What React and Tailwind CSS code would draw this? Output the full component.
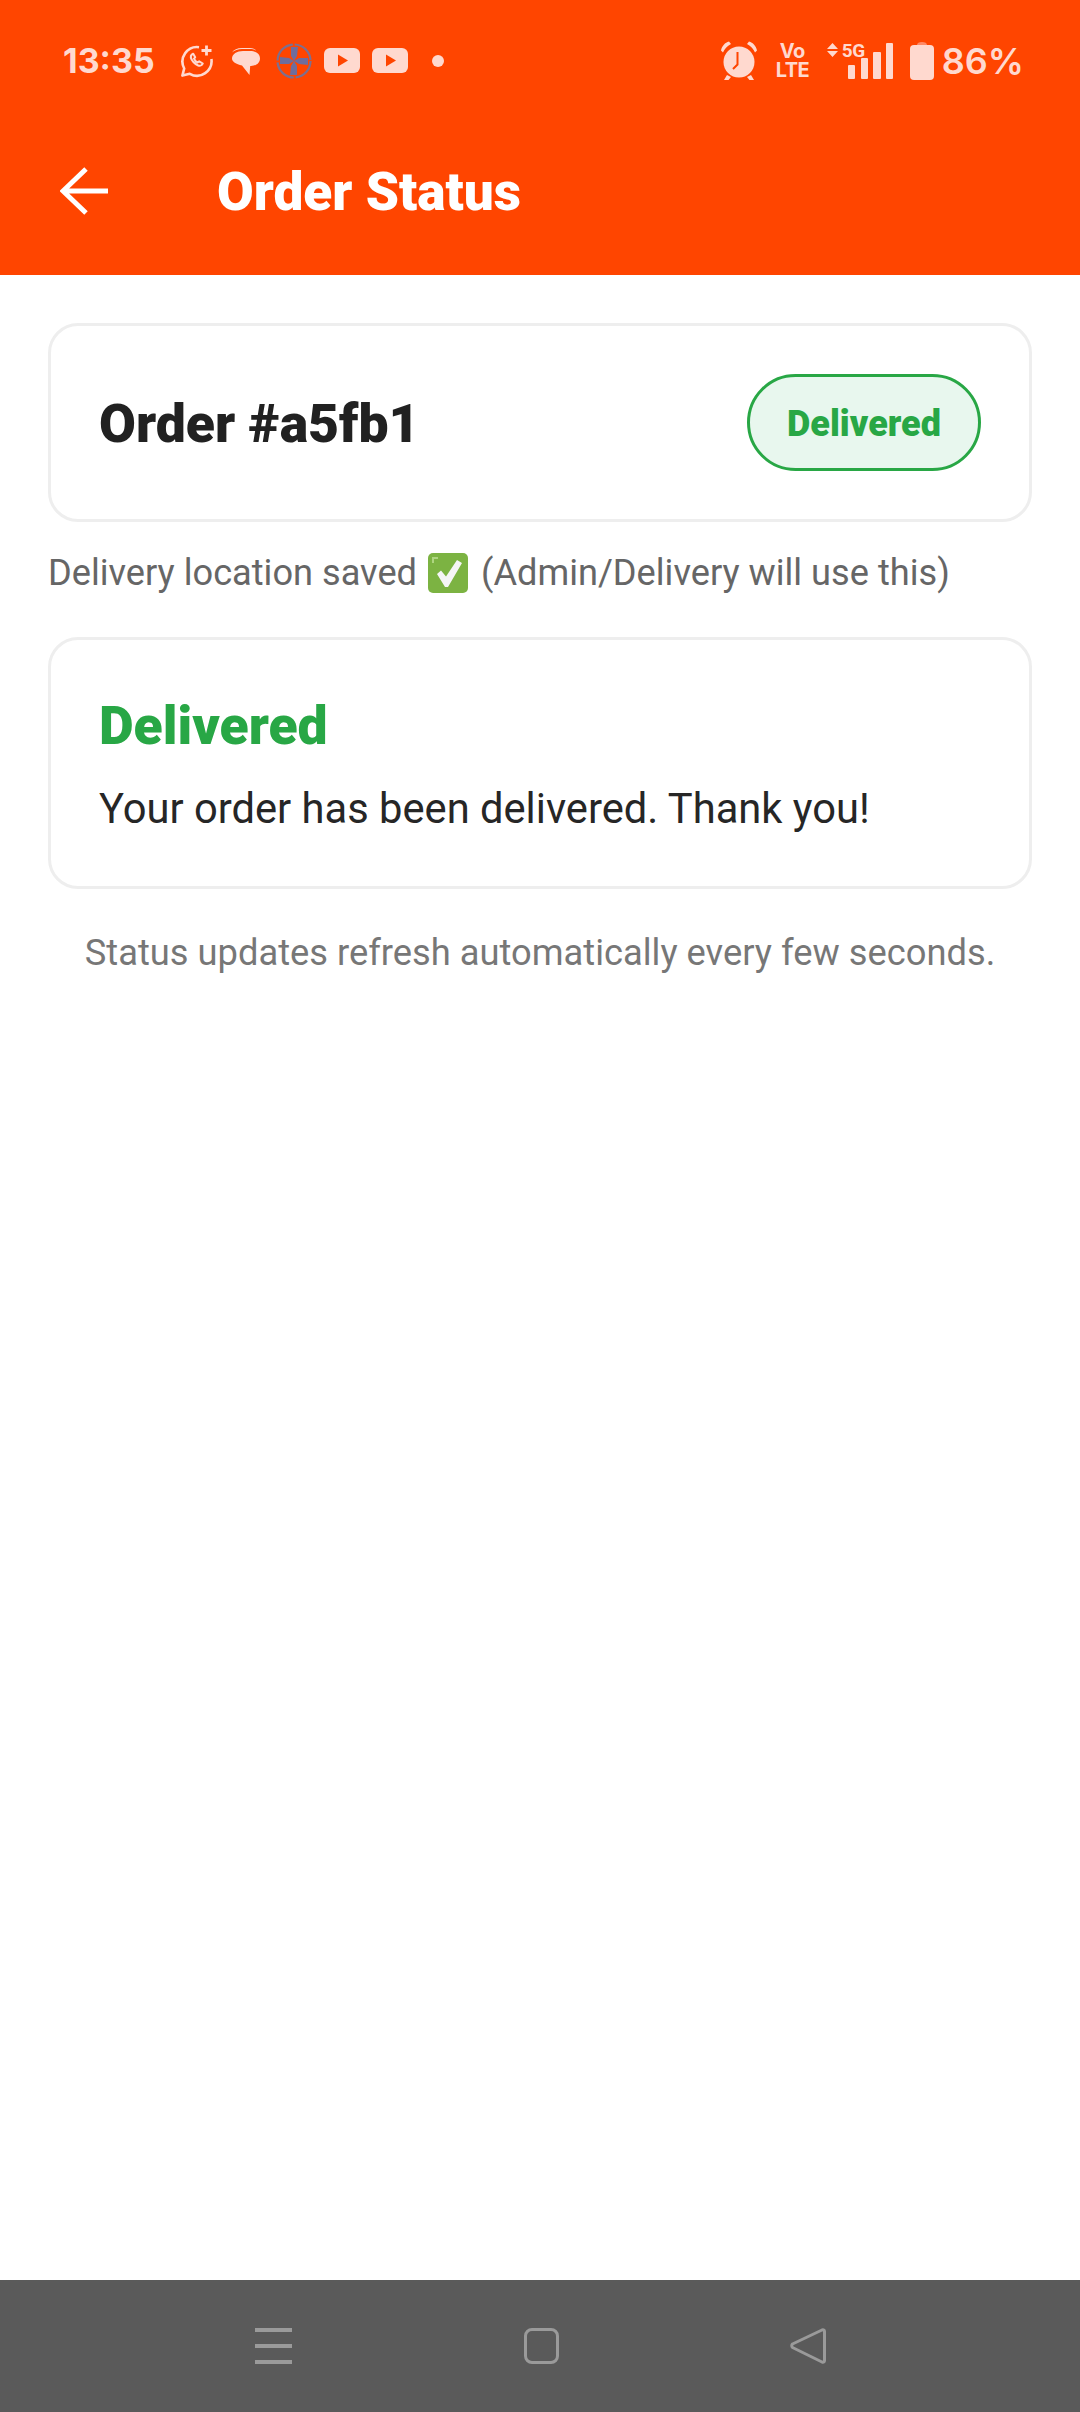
// Order status screen on a phone: status bar, header, two cards, nav bar

const tint = "#ffd9cf"

function WhatsAppPlus() {
  return (
    <svg width="34" height="34" viewBox="0 0 34 34" fill="none" stroke={tint} strokeWidth="2.6">
      <path d="M19 3.2A14.6 14.6 0 0 0 4.2 24.5L2.4 31.6l7.4-1.8A14.6 14.6 0 0 0 31.4 15" strokeLinejoin="round" />
      <path d="M11.8 10.5c-1.6 1.6-1 4.6 1.8 7.8 3 3.2 6.4 4.4 8.2 2.6l1-1.4-3.6-2.2-1.6 1.2c-1.4-.6-3-2.2-3.6-3.8l1.2-1.4-2-3.6z" strokeWidth="2" strokeLinejoin="round" />
      <path d="M26.5 1.5v10M21.5 6.5h10" strokeWidth="2.8" />
    </svg>
  )
}

function ChatBubble() {
  return (
    <svg width="30" height="29" viewBox="0 0 30 29">
      <path d="M1 5.500C3 2.500 6 1 11 1h8c3 0 5 1 6 2.500-2-1-4-1.400-6-1.400h-8C7 2.100 3.500 3.500 1 5.500z" fill={tint} />
      <path d="M12 4h7c6 0 10 3 10 7.500S25 19 20 19l-.8 0-.7 9-7.500-9.500C5 17 1 15 1 11.500 1 7 6 4 12 4z" fill={tint} />
    </svg>
  )
}

function Pinwheel() {
  return (
    <svg width="36" height="36" viewBox="0 0 36 36">
      <circle cx="18" cy="18" r="16.500" fill="none" stroke="#7d6f8e" strokeWidth="2.200" strokeDasharray="24 2" />
      <path d="M15 4h7l-1 9-3 5-3-5zM32 15v7l-9-1-5-3 5-3zM21 32h-7l1-9 3-5 3 5zM4 21v-7l9 1 5 3-5 3z" fill="#6f6d9c" />
    </svg>
  )
}

function YouTube() {
  return (
    <svg width="36" height="26" viewBox="0 0 36 26">
      <rect x="0" y="0" width="36" height="25" rx="6" fill={tint} />
      <path d="M14 6.500l10 6-10 6z" fill="#ff4500" />
    </svg>
  )
}

function Alarm() {
  return (
    <svg width="38" height="40" viewBox="0 0 38 40">
      <path d="M1 9.500C2 5 5 1.500 9 .500l2 2.500C7 5 4.500 8 3 11.500zM37 9.500C36 5 33 1.500 29 .500l-2 2.500c4 2 6.500 5 8 8.500z" fill={tint} />
      <circle cx="19" cy="21" r="15.500" fill={tint} />
      <path d="M7 34l-3 5h4.500l2.500-3zM31 34l3 5h-4.500l-2.500-3z" fill={tint} />
      <path d="M17.500 11v12.500L13 28" fill="none" stroke="#ff4500" strokeWidth="2" />
    </svg>
  )
}

function SignalBars() {
  return (
    <svg width="45" height="36" viewBox="0 0 45 36" fill={tint}>
      <rect x="0" y="22" width="7" height="14" rx="1" />
      <rect x="13" y="15" width="7" height="21" rx="1" />
      <rect x="25" y="9" width="8" height="27" rx="1" />
      <rect x="38" y="0" width="7" height="36" rx="1" />
    </svg>
  )
}

function Battery() {
  return (
    <svg width="24" height="38" viewBox="0 0 24 38">
      <path d="M7 3c0-2 2-3 5-3s5 1 5 3z" fill="#ff8a66" />
      <rect x="0" y="3" width="24" height="35" rx="4" fill={tint} />
    </svg>
  )
}

function StatusBar() {
  return (
    <div className="flex h-[122px] items-center pl-[63px] pr-[56px] text-[#ffd9cf]">
      <span className="w-[117px] font-['Inter',sans-serif] text-[34px] font-bold leading-none">13:35</span>
      <WhatsAppPlus />
      <span className="ml-[17px] flex"><ChatBubble /></span>
      <span className="ml-[15px] flex"><Pinwheel /></span>
      <span className="ml-[12px] flex"><YouTube /></span>
      <span className="ml-[12px] flex"><YouTube /></span>
      <span className="ml-[24px] h-3 w-3 rounded-full bg-[#ffd9cf]" />

      <span className="ml-auto flex"><Alarm /></span>
      <span className="ml-[18px] block w-[33px] text-center font-['Inter',sans-serif] text-[20px] font-bold leading-[19px] tracking-[-0.5px]">
        Vo<br />LTE
      </span>
      <div className="relative ml-[18px] h-[36px] w-[66px]">
        <svg className="absolute left-0 top-0" width="11" height="14" viewBox="0 0 11 14" fill={tint}>
          <path d="M5.500 0L11 6H0zM0 8h11l-5.500 6z" />
        </svg>
        <span className="absolute left-[15px] top-0 font-['Roboto',sans-serif] text-[19px] font-bold leading-[16px] tracking-[-0.5px]">5G</span>
        <span className="absolute right-0 top-0 flex"><SignalBars /></span>
      </div>
      <span className="ml-[17px] flex"><Battery /></span>
      <span className="ml-[8px] font-['Inter',sans-serif] text-[36px] font-semibold leading-none">86%</span>
    </div>
  )
}

function Card({ className, children }) {
  return <div className={`rounded-[30px] border-[3px] border-[#eeeeee] bg-white px-[48px] ${className}`}>{children}</div>
}

export default function App() {
  return (
    <div className="flex h-[2412px] flex-col bg-white font-['Roboto',sans-serif]">
      <header className="h-[275px] bg-[#ff4500]">
        <StatusBar />
        <div className="flex h-[138px] items-center pl-[60px]">
          <svg width="49" height="48" viewBox="0 0 49 48" fill="none" stroke="white" strokeWidth="5">
            <path d="M48 24H3M26 2L3 24l23 22" />
          </svg>
          <h1 className="ml-[108px] pt-[4px] text-[53.2px] font-black leading-none text-white">Order Status</h1>
        </div>
      </header>

      <main className="flex-1 px-[48px] pt-[48px]">
        <Card className="flex h-[199px] items-center justify-between">
          <span className="pt-[3px] text-[53.5px] font-black leading-none text-[#212121]">Order #a5fb1</span>
          <span className="flex h-[97px] w-[234px] items-center justify-center rounded-full border-[3px] border-[#28a745] bg-[#e8f7ee] pt-[3px] text-[36px] font-black text-[#28a745]">
            Delivered
          </span>
        </Card>

        <p className="mt-[30px] flex items-center text-[36.2px] leading-[42px] text-[#666666]">
          Delivery location saved
          <svg className="ml-[11px] mr-[13px]" width="40" height="40" viewBox="0 0 40 40">
            <rect width="40" height="40" rx="5" fill="#7cb342" />
            <path d="M4 4h6v2H6v4H4z" fill="#aed581" />
            <path d="M9 21l4-3.500 5 6L29 7l5 3-14 24h-3z" fill="#f5f5f5" />
          </svg>
          (Admin/Delivery will use this)
        </p>

        <Card className="mt-[43px] flex h-[252px] flex-col justify-center pt-[3px]">
          <h2 className="text-[53.5px] font-black leading-[60px] text-[#28a745]">Delivered</h2>
          <p className="mt-[29px] text-[41.7px] leading-[48px] text-[#262626]">Your order has been delivered. Thank you!</p>
        </Card>

        <p className="mt-[43px] text-center text-[36.3px] leading-[42px] text-[#777777]">
          Status updates refresh automatically every few seconds.
        </p>
      </main>

      <nav className="flex h-[132px] items-center bg-[#5a5a5a]">
        <div className="ml-[255px] flex h-9 w-[37px] flex-col justify-between">
          <span className="h-[4px] bg-[#9a9a9a]" />
          <span className="h-[4px] bg-[#9a9a9a]" />
          <span className="h-[4px] bg-[#9a9a9a]" />
        </div>
        <div className="ml-[232px] h-9 w-[35px] rounded-[8px] border-[3px] border-[#9a9a9a]" />
        <svg className="ml-[231px]" width="36" height="36" viewBox="0 0 36 36" fill="none" stroke="#9a9a9a" strokeWidth="3">
          <path d="M32 2L2.500 16c-1 .8-1 2.500 0 3.500L32 34c1.500.5 2.500 0 2.500-1.500V3.500C34.500 2 33.500 1.500 32 2z" strokeLinejoin="round" />
        </svg>
      </nav>
    </div>
  )
}
